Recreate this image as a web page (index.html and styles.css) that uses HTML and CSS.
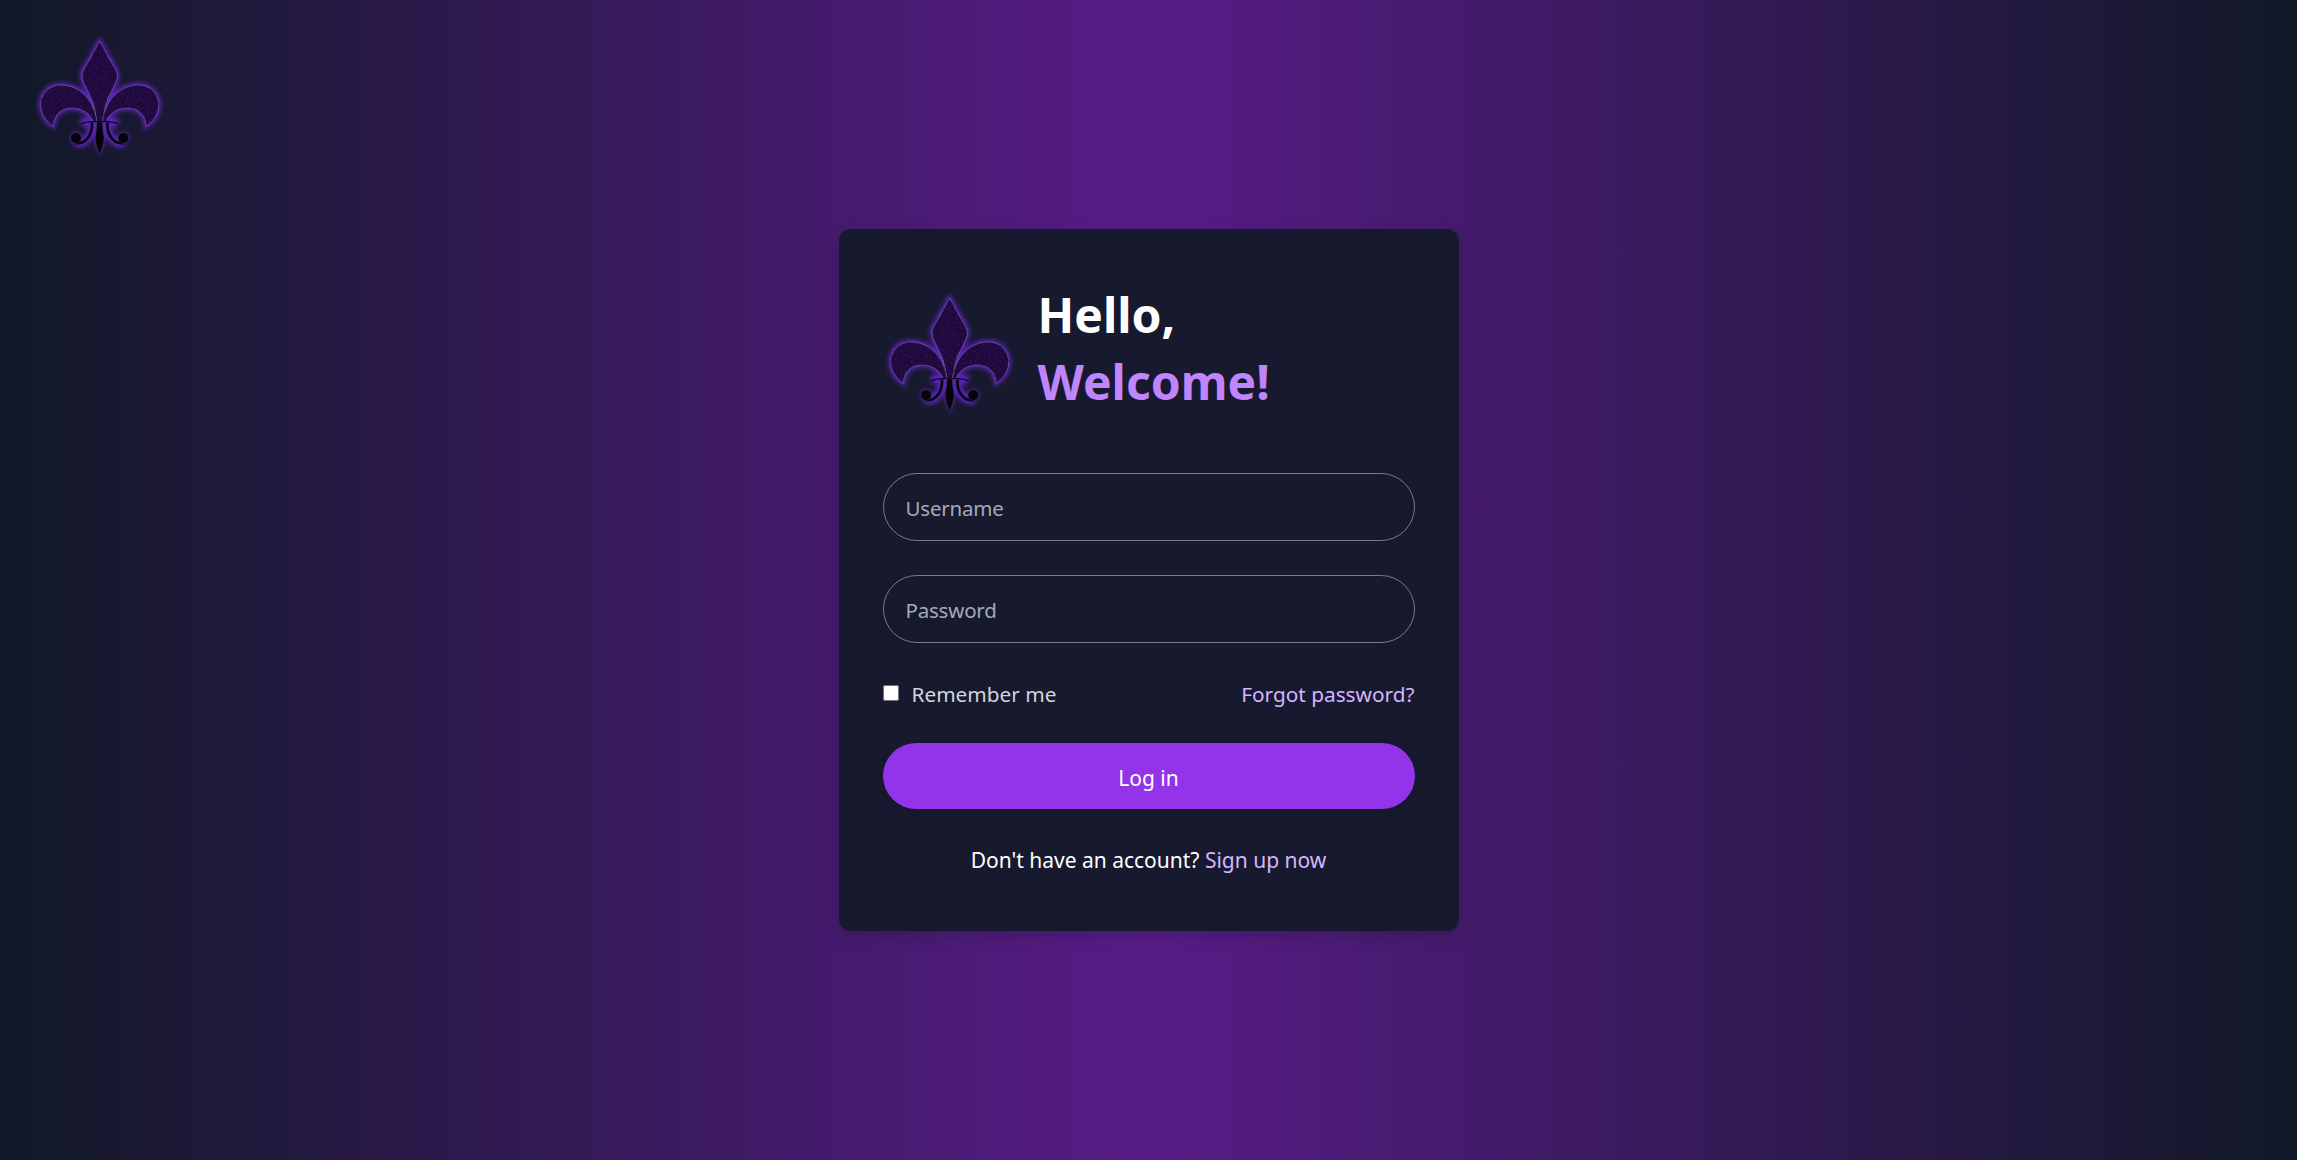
FILE: index.html
```html
<!DOCTYPE html>
<html lang="en">
<head>
    <meta charset="UTF-8">
    <meta name="viewport" content="width=device-width, initial-scale=1.0">
    <title>Log in</title>
    <link rel="stylesheet" href="styles.css">
</head>
<body>

    <svg class="defs" width="0" height="0" aria-hidden="true">
        <defs>
            <filter id="glow" x="-20%" y="-20%" width="140%" height="140%" color-interpolation-filters="sRGB">
                <feGaussianBlur stdDeviation="7"></feGaussianBlur>
            </filter>
            <filter id="grain" x="0" y="0" width="100%" height="100%" color-interpolation-filters="sRGB">
                <feTurbulence type="fractalNoise" baseFrequency="0.16" numOctaves="3" seed="4" result="noise"></feTurbulence>
                <feColorMatrix in="noise" type="matrix" values="0 0 0 0 0.19  0 0 0 0 0.07  0 0 0 0 0.36  2.2 0 0 0 -0.9" result="spots"></feColorMatrix>
                <feComposite in="spots" in2="SourceAlpha" operator="in" result="clipped"></feComposite>
                <feMerge>
                    <feMergeNode in="SourceGraphic"></feMergeNode>
                    <feMergeNode in="clipped"></feMergeNode>
                </feMerge>
            </filter>
            <g id="fleur-shapes">
                <path d="M239 58 L278 128 C287 143 292 150 292 160 C292 190 262 215 254 262 C251 278 249 290 248 300 L230 300 C229 290 227 278 224 262 C216 215 186 190 186 160 C186 150 191 143 200 128 Z"></path>
                <path d="M248 300 C250 255 285 192 352 189 C395 187 418 222 416 252 C415 278 397 300 378 313 C378 285 360 258 322 258 C285 258 264 282 257 300 Z"></path>
                <path d="M230 300 C228 255 193 192 126 189 C83 187 60 222 62 252 C63 278 81 300 100 313 C100 285 118 258 156 258 C193 258 214 282 221 300 Z"></path>
            </g>
            <g id="fleur-lines">
                <path class="fleur-bar" d="M184 306 C198 296 215 299 239 299 C263 299 280 296 294 306"></path>
                <path class="fleur-curl" d="M262 302 C260 340 282 368 312 363"></path>
                <path class="fleur-curl" d="M216 302 C218 340 196 368 166 363"></path>
                <circle class="fleur-ball" cx="310" cy="348" r="16"></circle>
                <circle class="fleur-ball" cx="168" cy="348" r="16"></circle>
                <path class="fleur-spear" d="M231 300 L247 300 C247 325 253 340 252 352 C251 368 244 385 239 397 C234 385 227 368 226 352 C225 340 231 325 231 300 Z"></path>
            </g>
            <symbol id="fleur" viewBox="0 0 480 450">
                <g class="fleur-glow" filter="url(#glow)">
                    <use href="#fleur-shapes"></use>
                    <use href="#fleur-lines"></use>
                </g>
                <use href="#fleur-shapes" class="fleur-body" filter="url(#grain)"></use>
                <use href="#fleur-lines"></use>
            </symbol>
        </defs>
    </svg>

    <svg class="corner-logo" viewBox="0 0 480 450"><use href="#fleur"></use></svg>

    <main class="card">
        <header class="card-head">
            <svg class="card-logo" viewBox="0 0 480 450"><use href="#fleur"></use></svg>
            <h1 class="greeting">Hello,<span class="greeting-accent">Welcome!</span></h1>
        </header>

        <form class="login-form">
            <input class="field" type="text" placeholder="Username">
            <input class="field" type="password" placeholder="Password">
            <div class="options">
                <label class="remember"><input class="remember-box" type="checkbox"> Remember me</label>
                <a class="link" href="#">Forgot password?</a>
            </div>
            <button class="submit" type="button">Log in</button>
        </form>

        <p class="signup">Don't have an account? <a class="link" href="#">Sign up now</a></p>
    </main>

</body>
</html>
```

FILE: styles.css
```css
* {
    box-sizing: border-box;
}
body {
    margin: 0;
    min-height: 100vh;
    display: grid;
    font-family: "Noto Sans", "Open Sans", sans-serif;
    color: #fff;
    background: linear-gradient(90deg, #111827 0%, #581c87 50%, #111827 100%);
}
.defs {
    position: absolute;
}
.corner-logo {
    grid-area: 1 / 1;
    justify-self: start;
    align-self: start;
    width: 160px;
    height: 150px;
    margin: 22px 0 0 20px;
}
.card {
    grid-area: 1 / 1;
    justify-self: center;
    align-self: center;
    width: 620px;
    height: 702px;
    padding: 44px;
    background: #171a2e;
    border-radius: 12px;
    box-shadow: 0 6px 16px rgba(0, 0, 0, 0.15);
}
.card-head {
    display: flex;
    align-items: flex-start;
    gap: 8px;
    margin-left: -13px;
    height: 140px;
}
.card-logo {
    width: 160px;
    height: 150px;
    flex: none;
    margin-top: 6px;
}
.greeting {
    margin: 8px 0 0;
    font-size: 48px;
    line-height: 67px;
    font-weight: 700;
}
.greeting-accent {
    display: block;
    color: #c084fc;
}
.login-form {
    display: flex;
    flex-direction: column;
    margin-top: 60px;
}
.field {
    height: 68px;
    margin-bottom: 34px;
    padding: 2px 22px 0;
    font-family: inherit;
    font-size: 20.5px;
    letter-spacing: -0.2px;
    color: #fff;
    background: transparent;
    border: 1px solid #757c8a;
    border-radius: 34px;
    outline: none;
}
.field::placeholder {
    color: #a3aab6;
}
.options {
    display: flex;
    justify-content: space-between;
    align-items: center;
    font-size: 20.8px;
    height: 36px;
    margin-top: -1px;
    color: #d1d5db;
}
.remember {
    display: flex;
    align-items: center;
    gap: 13px;
}
.remember-box {
    width: 16px;
    height: 16px;
    margin: -3px 0 0;
}
.link {
    color: #d8b4fe;
    text-decoration: none;
}
.submit {
    height: 66px;
    margin-top: 31px;
    padding-top: 4px;
    font-family: inherit;
    font-size: 21px;
    color: #fff;
    background: #9333ea;
    border: 0;
    border-radius: 33px;
    box-shadow: 0 4px 8px rgba(0, 0, 0, 0.1);
}
.signup {
    margin: 37px 0 0;
    text-align: center;
    font-size: 21px;
}
.fleur-glow {
    --line: #5d22bd;
    --ball: #5d22bd;
    --line-w: 26px;
    --ball-edge: #5d22bd;
    fill: #5d22bd;
    stroke: #5d22bd;
    stroke-width: 13px;
}
.fleur-body {
    fill: #1d0938;
    stroke: #8670ae;
    stroke-width: 2px;
}
.fleur-bar {
    fill: none;
    stroke: var(--line, #07030d);
    stroke-width: var(--line-w, 4px);
}
.fleur-curl {
    fill: none;
    stroke: var(--line, #07030d);
    stroke-width: var(--line-w, 8px);
}
.fleur-ball,
.fleur-spear {
    fill: var(--ball, #07030d);
    stroke: var(--ball-edge, #3f3058);
    stroke-width: 1.5px;
}
```
